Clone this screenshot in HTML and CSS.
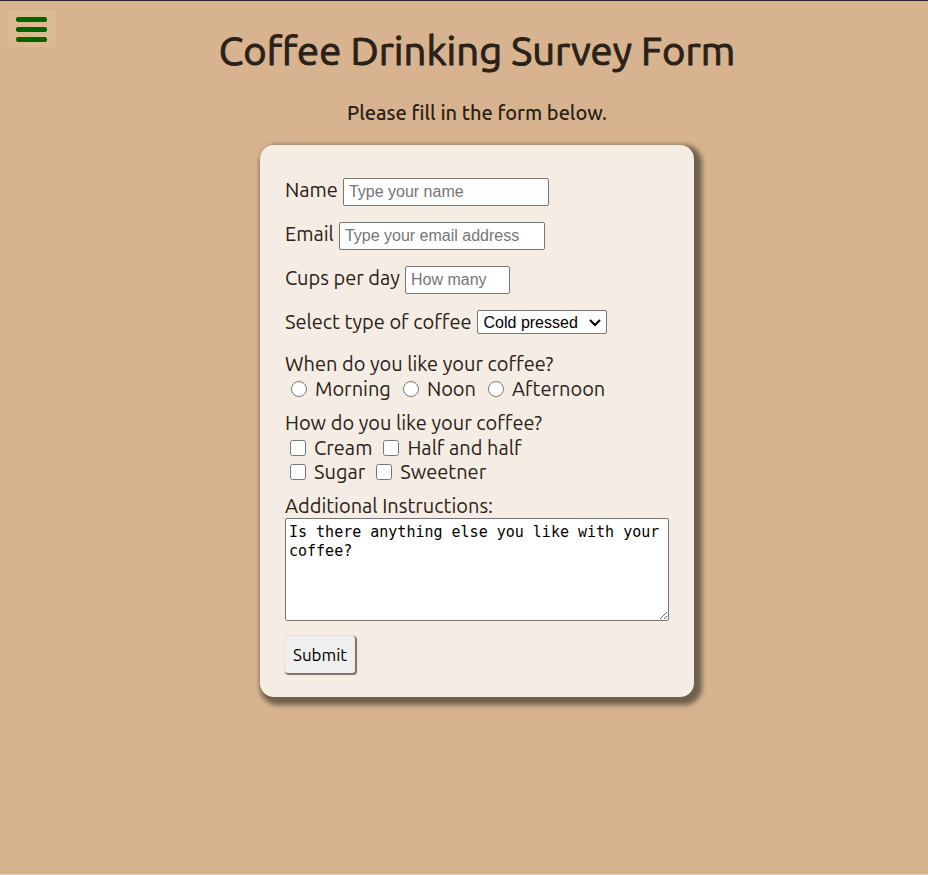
FILE: index.html
```html
<!DOCTYPE html>
<html lang="en">
<head>
<meta charset="utf-8">
<meta name="viewport" content="width=device-width, initial-scale=1">
<title>Coffee Drinking Survey Form</title>
<link rel="stylesheet" href="styles.css">
</head>
<body>
<button class="menu" type="button" aria-label="Menu">
<svg width="31" height="25" viewBox="0 0 31 25" fill="#006400" aria-hidden="true"><rect width="31" height="5" rx="2"/><rect y="10" width="31" height="5" rx="2"/><rect y="20" width="31" height="5" rx="2"/></svg>
</button>
<main class="page">
<h1 class="title">Coffee Drinking Survey Form</h1>
<p class="intro">Please fill in the form below.</p>
<form class="card">
<div class="field"><label for="name">Name</label><input class="text" id="name" type="text" placeholder="Type your name"></div>
<div class="field"><label for="email">Email</label><input class="text" id="email" type="email" placeholder="Type your email address"></div>
<div class="field"><label for="cups">Cups per day</label><input class="text number" id="cups" type="number" placeholder="How many"></div>
<div class="field"><label for="type">Select type of coffee</label><span class="picker"><select class="select" id="type"><option>Cold pressed</option></select><svg class="chevron" width="12" height="8" viewBox="0 0 12 8" fill="none" stroke="#000" stroke-width="2" aria-hidden="true"><path d="M1 1l5 5 5-5"/></svg></span></div>
<fieldset class="group group-first">
<legend>When do you like your coffee?</legend>
<div class="options radios"><label class="option"><input type="radio" name="when">Morning</label><label class="option"><input type="radio" name="when">Noon</label><label class="option"><input type="radio" name="when">Afternoon</label></div>
</fieldset>
<fieldset class="group">
<legend>How do you like your coffee?</legend>
<div class="options"><label class="option"><input type="checkbox">Cream</label><label class="option"><input type="checkbox">Half and half</label></div>
<div class="options"><label class="option"><input type="checkbox">Sugar</label><label class="option"><input type="checkbox">Sweetner</label></div>
</fieldset>
<div class="group">
<label for="notes">Additional Instructions:</label>
<textarea class="notes" id="notes">Is there anything else you like with your coffee?</textarea>
</div>
<button class="submit" type="submit">Submit</button>
</form>
</main>
</body>
</html>
```
FILE: styles.css
```css
* {
  box-sizing: border-box;
}

body {
  margin: 0;
  min-height: 100vh;
  border-top: 1px solid #23202b;
  border-bottom: 1px solid #e2d3d5;
  background: #d7b48f;
  color: #2a2118;
  font: 20px/24px "Ubuntu", "Noto Sans", sans-serif;
}

.menu {
  position: absolute;
  top: 10px;
  left: 7px;
  display: flex;
  padding: 7px 9px 5px;
  border: 0;
  background: #d9bb92;
}

.page {
  display: flex;
  flex-direction: column;
  align-items: center;
  padding: 26px 0 24px 26px;
}

.title {
  margin: 0;
  font-size: 40px;
  line-height: 48px;
  font-weight: 400;
  -webkit-text-stroke: 1px #2a2118;
}

.intro {
  margin: 26px 0 20px;
  font-weight: 500;
}

.card {
  width: 100%;
  max-width: 434px;
  padding: 33px 25px 24px;
  border-radius: 14px;
  background: #f5ede3;
  box-shadow: 4px 4px 5px 4px #6f5f4e;
}

.field {
  display: flex;
  gap: 5px;
  margin-bottom: 16px;
}

.text {
  width: 206px;
  height: 28px;
  padding: 1px 5px;
  border: 1px solid #767676;
  border-radius: 2px;
  background: #fff;
  font: 16px "Liberation Sans", sans-serif;
}

.number {
  width: 105px;
}

.picker {
  position: relative;
  display: flex;
  height: 24px;
}

.select {
  appearance: none;
  width: 130px;
  height: 24px;
  padding: 0 6px;
  border: 1px solid #767676;
  border-radius: 2px;
  background: #fff;
  color: #000;
  font: 16px "Liberation Sans", sans-serif;
}

.chevron {
  position: absolute;
  top: 9px;
  right: 6px;
  pointer-events: none;
}

.group {
  margin: 10px 0 0;
  padding: 0;
  border: 0;
}

.group-first {
  margin-top: 18px;
}

.group legend {
  padding: 0 0 1px;
}

.options {
  display: flex;
  gap: 11px;
  padding-left: 5px;
}

.radios {
  gap: 12px;
  padding-left: 6px;
}

.option {
  display: flex;
  align-items: center;
  gap: 8px;
}

.option input {
  width: 16px;
  height: 16px;
  margin: 0;
}

.notes {
  display: block;
  width: 100%;
  height: 103px;
  padding: 4px 3px;
  border: 1px solid #767676;
  border-radius: 2px;
  background: #fff;
  color: #000;
  font: 15px/19px "DejaVu Sans Mono", monospace;
}

.submit {
  display: block;
  height: 37px;
  margin-top: 15px;
  padding: 0 8px;
  border: 0;
  border-radius: 3px;
  background: #efefef;
  box-shadow: 1px 1px 1px 1px #7c7065;
  color: #000;
  font: 17px "Ubuntu", "Noto Sans", sans-serif;
}
```
